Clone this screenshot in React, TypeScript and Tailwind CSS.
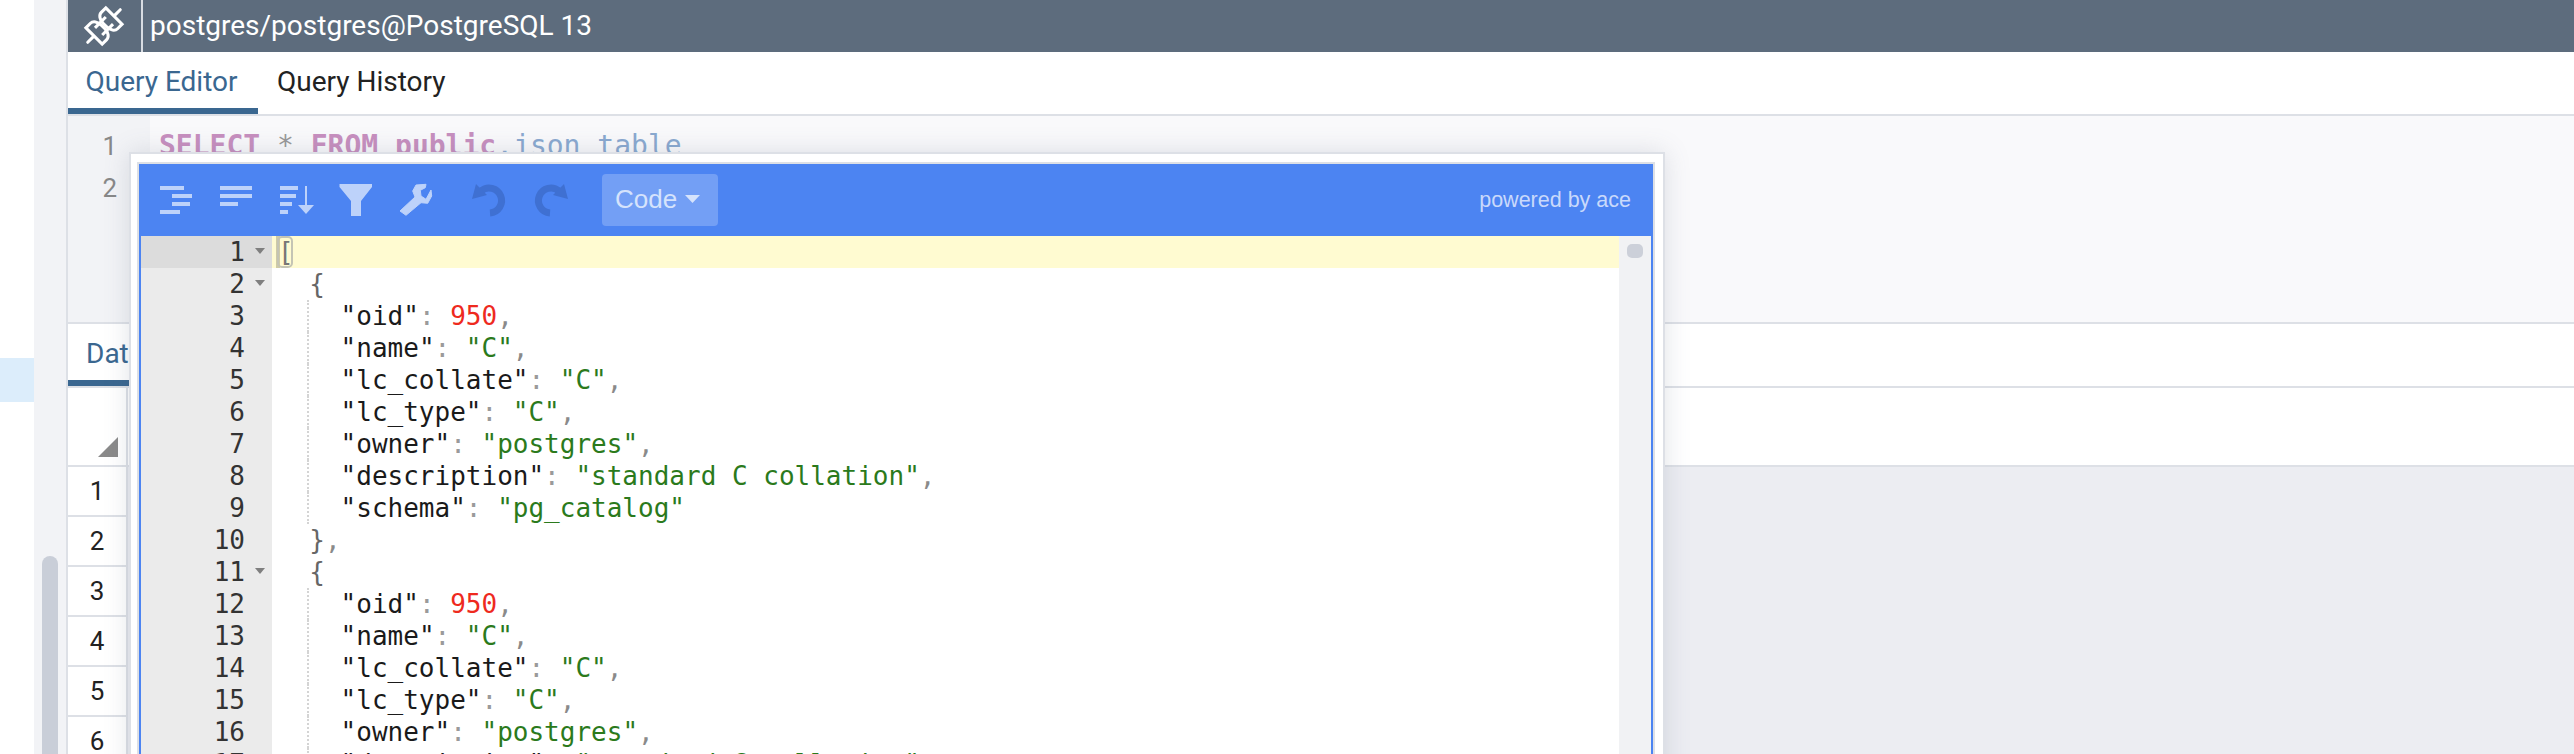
const jsonBlock = [
  { key: "oid", num: "950" },
  { key: "name", str: "C" },
  { key: "lc_collate", str: "C" },
  { key: "lc_type", str: "C" },
  { key: "owner", str: "postgres" },
  { key: "description", str: "standard C collation" },
  { key: "schema", str: "pg_catalog" },
];

const rowNumbers = [1, 2, 3, 4, 5, 6];

function Fold() {
  return (
    <svg width="10" height="6" viewBox="0 0 10 6" className="mt-[-2px]">
      <polygon points="0,0 10,0 5,6" fill="#7f7f7f" />
    </svg>
  );
}

function GutterRow({ n, fold, active }: { n: number; fold?: boolean; active?: boolean }) {
  return (
    <div className={`flex h-8 items-center ${active ? "bg-[#dcdcdc]" : ""}`}>
      <span className="w-[104px] text-right">{n}</span>
      <span className="flex w-[27px] justify-center pl-[2px]">{fold && <Fold />}</span>
    </div>
  );
}

function Prop({ item, last }: { item: (typeof jsonBlock)[number]; last?: boolean }) {
  return (
    <div className="flex h-8 whitespace-pre">
      <span className="h-8 w-[2ch] border-r-2 border-dotted border-[#d4d4d4]" />
      <span className="pl-[2ch] text-[#1a1a1a]">
        "{item.key}"<span className="text-[#9a9a9a]">: </span>
        {item.num ? (
          <span className="text-[#ee2a1e]">{item.num}</span>
        ) : (
          <span className="text-[#2b7a1c]">"{item.str}"</span>
        )}
        {!last && <span className="text-[#8a8a8a]">,</span>}
      </span>
    </div>
  );
}

function Brace({ text }: { text: string }) {
  return (
    <div className="h-8 whitespace-pre text-[#666]">
      {"  "}
      {text}
    </div>
  );
}

function Toolbar() {
  return (
    <div className="flex h-[72px] items-center bg-[#4c84f2] pr-[22px]">
      <svg width="320" height="36" viewBox="0 0 320 36" className="ml-[21px] shrink-0">
        <g fill="#bdd2fa">
          <rect x="0" y="4" width="24" height="4" />
          <rect x="12" y="12" width="20" height="4" />
          <rect x="12" y="20" width="18" height="4" />
          <rect x="0" y="28" width="20" height="4" />

          <rect x="60" y="4" width="32" height="4" />
          <rect x="60" y="12" width="32" height="4" />
          <rect x="60" y="20" width="18" height="4" />

          <rect x="120" y="4" width="18" height="4" />
          <rect x="120" y="12" width="16" height="4" />
          <rect x="120" y="20" width="12" height="4" />
          <rect x="120" y="28" width="8" height="4" />
          <rect x="145" y="4" width="2" height="20" />
          <polygon points="138,23 154,23 146,32" />

          <polygon points="179.5,2 212,2 212,5 201,19 201,34 191,34 191,19 179.5,5" />

          <polygon
            points="256,3 266,2.3 265.3,5.7 260.3,8.3 261,14 266,17.3 271,8 271.7,14 267.7,21.3 261,20.7 246,33.3 240,29 255,15 252.7,9"
            stroke="#bdd2fa"
            strokeWidth="1"
            strokeLinejoin="round"
          />
        </g>
      </svg>
      <svg width="96" height="36" viewBox="0 0 96 36" className="ml-[-8px] mr-[34px] shrink-0">
        <g fill="none" stroke="#3f70d2" strokeWidth="7">
          <path d="M9 9 A12.5 12.5 0 1 1 18 31" />
          <path d="M87 9 A12.5 12.5 0 1 0 78 31" />
        </g>
        <g fill="#3f70d2">
          <polygon points="0,17 4,2 15,13" />
          <polygon points="96,17 92,2 81,13" />
        </g>
      </svg>
      <div className="flex h-[52px] w-[116px] shrink-0 items-center gap-[8px] rounded-[4px] bg-[#739ff5] pb-[2px] pl-[13px] font-['Liberation_Sans',sans-serif] text-[26px] text-[#d5e3fc]">
        Code
        <svg width="15" height="8" viewBox="0 0 15 8">
          <polygon points="0,0 15,0 7.5,8" fill="#d5e3fc" />
        </svg>
      </div>
      <span className="ml-auto font-['Liberation_Sans',sans-serif] text-[21.5px] text-[#c9d9fb]">powered by ace</span>
    </div>
  );
}

function JsonDialog() {
  const blockLines = [1, 2];
  return (
    <div className="absolute left-[61px] top-[152px] h-[640px] w-[1536px] border-2 border-[#dde0e6] bg-white pl-[6px] pr-2 pt-2 shadow-[0_0_24px_rgba(90,100,120,0.18)]">
      <div className="h-full border-2 border-[#dde0e6]">
        <div className="h-full">
          <Toolbar />
          <div className="flex h-full border-x-2 border-[#4c84f2] font-['DejaVu_Sans_Mono',monospace] text-[26px] leading-8">
            <div className="w-[131px] shrink-0 bg-[#ebebeb] text-[#333]">
              {Array.from({ length: 17 }, (_, i) => i + 1).map((n) => (
                <GutterRow key={n} n={n} fold={n === 1 || n === 2 || n === 11} active={n === 1} />
              ))}
            </div>
            <div className="min-w-0 flex-1 pl-[6px]">
              <div className="relative -ml-[6px] h-8 bg-[#fffbd1] pl-[6px]">
                <span className="absolute left-[4px] top-0 h-8 w-1 bg-[#cfcba6]" />
                <span className="absolute left-[5px] top-0 h-8 w-[16px] rounded-[5px] border-2 border-[#c4c4b4]" />
                <span className="relative text-[#777]">[</span>
              </div>
              {blockLines.map((b) => (
                <div key={b}>
                  <Brace text="{" />
                  {jsonBlock.map((item, i) => (
                    <Prop key={item.key} item={item} last={i === jsonBlock.length - 1} />
                  ))}
                  {b === 1 && (
                    <div className="h-8 whitespace-pre text-[#666]">
                      {"  }"}
                      <span className="text-[#8a8a8a]">,</span>
                    </div>
                  )}
                </div>
              ))}
            </div>
            <div className="w-8 shrink-0 bg-[#f1f2f4] pl-2 pt-2">
              <div className="h-[14px] w-4 rounded-[5px] bg-[#ccd0d9]" />
            </div>
          </div>
        </div>
      </div>
    </div>
  );
}

export default function App() {
  return (
    <div className="flex h-[754px] w-[2574px] overflow-hidden bg-white font-['Roboto',sans-serif]">
      <div className="w-[34px] shrink-0 pt-[358px]">
        <div className="h-[44px] bg-[#dcedfb]" />
      </div>
      <div className="w-[34px] shrink-0 border-r-2 border-[#dde0e6] bg-[#f2f3f6] pl-2 pt-[556px]">
        <div className="h-[300px] w-4 rounded-t-lg bg-[#c9ced8]" />
      </div>

      <div className="relative min-w-0 flex-1">
        <div className="flex h-[52px] items-stretch bg-[#5d6c7d] text-white">
          <div className="flex w-[75px] items-center justify-center border-r-2 border-[#d8dce2] pr-[2px]">
            <svg width="46" height="46" viewBox="0 0 36 36" fill="none" stroke="#fff" strokeWidth="2.4">
              <g transform="rotate(45 18 18)">
                <path d="M18 0 V6 M18 30 V36" strokeLinecap="round" />
                <path d="M9 7 H27 V12 A7 5 0 0 1 20 17 H16 A7 5 0 0 1 9 12 Z" />
                <path d="M9 29 H27 V24 A7 5 0 0 0 20 19 H16 A7 5 0 0 0 9 24 Z" />
                <path d="M14 12 V24 M22 12 V24" />
              </g>
            </svg>
          </div>
          <div className="flex items-center pl-[7px] text-[28px]">postgres/postgres@PostgreSQL 13</div>
        </div>

        <div className="flex h-[64px] border-b-2 border-[#dde0e6] text-[28px] text-[#222]">
          <div className="flex w-[190px] justify-center border-b-[6px] border-[#3a6790] pr-[3px] pt-[9px] text-[#3a6790]">Query Editor</div>
          <div className="pl-[19px] pt-[9px]">Query History</div>
        </div>

        <div className="flex h-[208px] border-b-2 border-[#dde0e6] bg-[#f9f9fb] font-['DejaVu_Sans_Mono',monospace] text-[28px]">
          <div className="w-[82px] bg-[#f2f3f6] pt-[9px] text-right font-['Roboto',sans-serif] text-[26px] leading-[42px] text-[#888]">
            <div className="pr-[33px]">1</div>
            <div className="pr-[33px]">2</div>
          </div>
          <div className="whitespace-pre pl-[9px] pt-[9px] leading-[42px] text-[#8aa9d0]">
            <span className="font-bold text-[#c78fbf]">SELECT</span>
            <span className="text-[#999]"> * </span>
            <span className="font-bold text-[#c78fbf]">FROM public</span>.json_table
          </div>
        </div>

        <div className="h-[64px] border-b-2 border-[#dde0e6] text-[28px]">
          <div className="inline-flex h-[62px] border-b-[6px] border-[#3a6790] px-[18px] pt-[9px] text-[#3a6790]">Data Output</div>
        </div>

        <div className="flex h-full bg-[#ecedf2]">
          <div className="w-[60px] shrink-0 text-[26px] text-[#222]">
            <div className="flex h-[79px] items-end justify-end border-b-[2px] border-r-2 border-[#dde0e6] bg-white pb-[8px] pr-[8px]">
              <svg width="20" height="20" viewBox="0 0 20 20">
                <polygon points="20,0 20,20 0,20" fill="#8a8a8a" />
              </svg>
            </div>
            {rowNumbers.map((n) => (
              <div key={n} className="flex h-[50px] items-center justify-center border-b-[2px] border-r-2 border-[#dde0e6] bg-white">
                {n}
              </div>
            ))}
          </div>
          <div className="h-[79px] flex-1 border-b-[2px] border-[#dde0e6] bg-white" />
        </div>

        <JsonDialog />
      </div>
    </div>
  );
}
